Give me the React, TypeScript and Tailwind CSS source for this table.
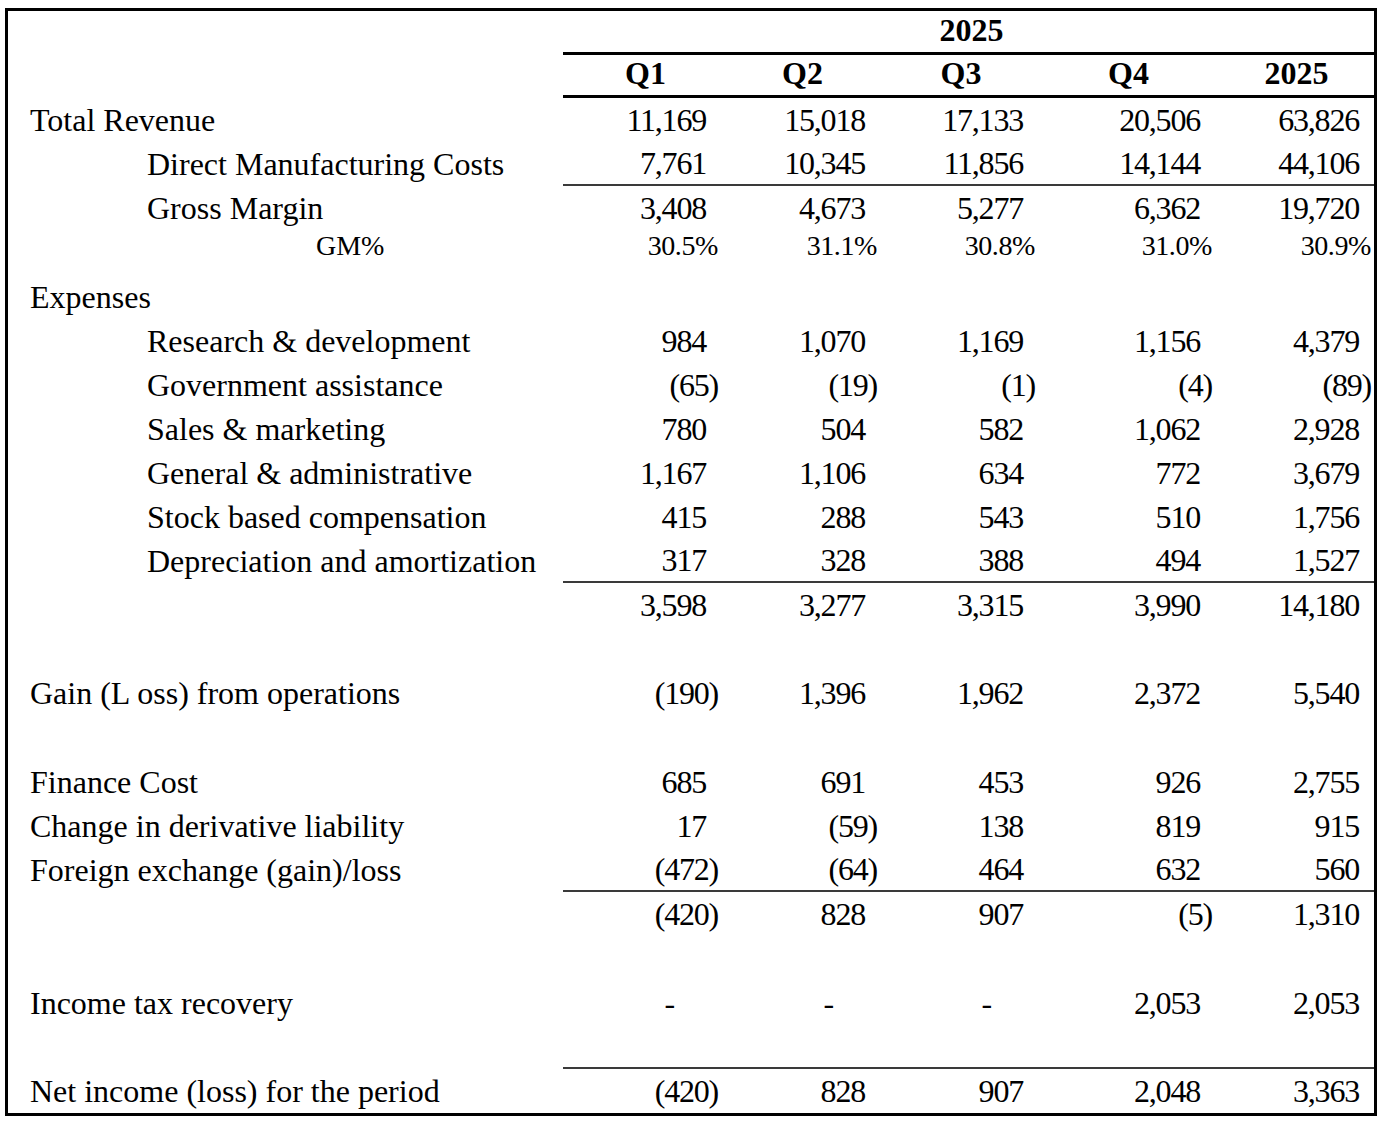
import type { FC } from 'react'
import { clsx } from 'clsx'

type RowProps = {
  label?: string
  indent?: 0 | 1 | 2
  values?: string[]
  line?: boolean
  tall?: boolean
}

const grid = 'grid grid-cols-[155px_159px_158px_177px_159px_1fr]'

const padFor = (v: string) => {
  if (v.startsWith('(')) return 'pr-0'
  if (v === '-') return 'pr-[44px]'
  return 'pr-[12px]'
}

const Row: FC<RowProps> = ({ label, indent = 0, values, line, tall }) => (
  <div className={clsx('flex', tall ? 'h-[45px]' : 'h-[44px]')}>
    <div
      className={clsx(
        'flex w-[555px] shrink-0 items-center whitespace-nowrap text-[32px] leading-none',
        indent === 0 && 'pl-[22px]',
        indent === 1 && 'pl-[139px]',
      )}
    >
      {label}
    </div>
    <div className={clsx('flex-1 items-center', grid, line && 'border-b-2 border-[#3a3a3a]')}>
      {values?.map((v, i) => (
        <div key={i} className={clsx('text-right text-[32px] leading-none tracking-[-1.2px]', padFor(v))}>
          {v}
        </div>
      ))}
    </div>
  </div>
)

export default function App() {
  return (
    <div className="min-h-[1128px] w-[1382px] bg-white pt-[8px] pl-[5px] font-['Liberation_Serif','Times_New_Roman',serif] text-black">
      <div className="w-[1372px] border-[3px] border-black">
        {/* year header */}
        <div className="flex h-[44px]">
          <div className="w-[555px] shrink-0" />
          <div className="flex flex-1 items-center justify-center border-b-[3px] border-black pb-[4px] pl-[6px] font-bold text-[32px] leading-none">
            2025
          </div>
        </div>
        {/* quarter header */}
        <div className="flex h-[43px]">
          <div className="w-[555px] shrink-0" />
          <div className={clsx('flex-1 items-center border-b-[3px] border-black pb-[4px] font-bold text-[32px] leading-none', grid)}>
            {['Q1', 'Q2', 'Q3', 'Q4', '2025'].map((q) => (
              <div key={q} className="pl-[10px] text-center">
                {q}
              </div>
            ))}
          </div>
        </div>

        <Row label="Total Revenue" values={['11,169', '15,018', '17,133', '20,506', '63,826']} />
        <Row label="Direct Manufacturing Costs" indent={1} values={['7,761', '10,345', '11,856', '14,144', '44,106']} line />
        <Row label="Gross Margin" indent={1} values={['3,408', '4,673', '5,277', '6,362', '19,720']} />

        {/* GM% row, smaller type */}
        <div className="flex h-[45px] items-start">
          <div className="w-[555px] shrink-0 pl-[308px] text-[28px] leading-[32px]">GM%</div>
          <div className={clsx('flex-1 text-[28px] leading-[32px] tracking-[-0.4px]', grid)}>
            {['30.5%', '31.1%', '30.8%', '31.0%', '30.9%'].map((p, i) => (
              <div key={i} className="text-right">
                {p}
              </div>
            ))}
          </div>
        </div>

        <Row label="Expenses" />
        <Row label="Research & development" indent={1} values={['984', '1,070', '1,169', '1,156', '4,379']} />
        <Row label="Government assistance" indent={1} values={['(65)', '(19)', '(1)', '(4)', '(89)']} />
        <Row label="Sales & marketing" indent={1} values={['780', '504', '582', '1,062', '2,928']} />
        <Row label="General & administrative" indent={1} values={['1,167', '1,106', '634', '772', '3,679']} />
        <Row label="Stock based compensation" indent={1} values={['415', '288', '543', '510', '1,756']} />
        <Row label="Depreciation and amortization" indent={1} values={['317', '328', '388', '494', '1,527']} line />
        <Row values={['3,598', '3,277', '3,315', '3,990', '14,180']} />
        <Row />
        <Row label="Gain (L oss) from operations" values={['(190)', '1,396', '1,962', '2,372', '5,540']} />
        <Row tall />
        <Row label="Finance Cost" values={['685', '691', '453', '926', '2,755']} />
        <Row label="Change in derivative liability" values={['17', '(59)', '138', '819', '915']} />
        <Row label="Foreign exchange (gain)/loss" values={['(472)', '(64)', '464', '632', '560']} line />
        <Row values={['(420)', '828', '907', '(5)', '1,310']} />
        <Row tall />
        <Row label="Income tax recovery" values={['-', '-', '-', '2,053', '2,053']} />
        <Row line />
        <Row label="Net income (loss) for the period" values={['(420)', '828', '907', '2,048', '3,363']} />
      </div>
    </div>
  )
}
